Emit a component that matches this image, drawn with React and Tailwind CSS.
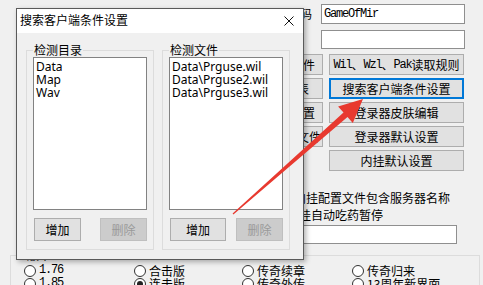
import React from "react";

const CJK = "font-['Noto_Sans_CJK_SC',sans-serif]";
const MONO = "font-['Liberation_Mono','Noto_Sans_CJK_SC',monospace] tracking-[-1.2px]";

function Radio({ label, checked, mono }) {
  return (
    <div className="flex items-center gap-[3px] h-[13px]">
      <span className="w-[12px] h-[12px] shrink-0 rounded-full border border-[#333333] bg-white flex items-center justify-center">
        {checked && <span className="w-[6px] h-[6px] rounded-full bg-[#222222]" />}
      </span>
      <span className={`text-[12px] leading-[13px] text-black whitespace-nowrap ${mono ? MONO : CJK}`}>{label}</span>
    </div>
  );
}

function WinButton({ children, className = "" }) {
  return (
    <div className={`h-[23px] border border-[#adadad] bg-[#e1e1e1] flex items-center justify-center text-[12px] text-black ${CJK} ${className}`}>
      {children}
    </div>
  );
}

function DisabledButton({ children, className = "" }) {
  return (
    <div className={`h-[23px] border border-[#bfbfbf] bg-[#cccccc] flex items-center justify-center text-[12px] text-[#9a9a9a] ${CJK} ${className}`}>
      {children}
    </div>
  );
}

function Group({ title, items, addW }) {
  return (
    <fieldset className="w-[128px] h-[208px] border border-[#dcdcdc] px-[6px]">
      <legend className={`px-[1px] text-[12px] leading-[16px] text-black ${CJK}`}>{title}</legend>
      <div className="-mt-[1px] w-[114px] h-[153px] bg-white border border-[#828282] pt-[2px] pl-[2px] font-['Noto_Sans','Open_Sans',sans-serif] text-[12px] leading-[13px] text-black">
        {items.map((t) => (
          <div key={t} className="whitespace-nowrap">{t}</div>
        ))}
      </div>
      <div className="mt-[8px] ml-[1px] flex items-center justify-between">
        <WinButton className={addW}>增加</WinButton>
        <DisabledButton className="w-[47px]">删除</DisabledButton>
      </div>
    </fieldset>
  );
}

function BgButton({ children, className = "" }) {
  return (
    <div className={`h-[21px] border border-[#adadad] bg-[#e1e1e1] flex items-center text-[12px] text-black whitespace-nowrap overflow-hidden ${className}`}>
      {children}
    </div>
  );
}

export default function App() {
  return (
    <div className="relative w-[483px] h-[285px] overflow-hidden bg-[#f0f0f0]">
      {/* background main window */}
      <div className="flex flex-col">
        <div className="mt-[4px] flex items-center h-[20px]">
          <div className={`w-[312px] text-right text-[12px] text-black ${CJK}`}>游戏代码</div>
          <div className="ml-[9px] w-[144px] h-[20px] bg-white border border-[#8f8f8f] flex items-center pl-[2px]">
            <span className={`text-[12px] text-black ${MONO}`}>GameOfMir</span>
          </div>
        </div>
        <div className="mt-[6px] flex items-center h-[19px]">
          <div className="w-[312px]" />
          <div className="ml-[9px] w-[144px] h-[19px] bg-white border border-[#8f8f8f]" />
        </div>

        <div className="mt-[5px] flex">
          <div className="ml-[230px] w-[93px] flex flex-col gap-[3px]">
            <BgButton className={`justify-end pr-[7px] ${CJK}`}>客户端文件</BgButton>
            <BgButton className={`justify-end pr-[13px] ${CJK}`}>列表</BgButton>
            <BgButton className={`justify-end pr-[7px] ${CJK}`}>设置</BgButton>
            <BgButton className={`justify-end pr-[1px] ${CJK}`}>文件</BgButton>
          </div>
          <div className="ml-[6px] w-[135px] flex flex-col gap-[3px]">
            <BgButton className="justify-center">
              <span className={MONO}>Wil</span>
              <span className={CJK}>、</span>
              <span className={MONO}>Wzl</span>
              <span className={CJK}>、</span>
              <span className={MONO}>Pak</span>
              <span className={CJK}>读取规则</span>
            </BgButton>
            <div className={`h-[21px] border-2 border-[#0078d7] bg-[#e1e1e1] flex items-center justify-center text-[12px] text-black ${CJK}`}>
              搜索客户端条件设置
            </div>
            <BgButton className={`justify-center ${CJK}`}>登录器皮肤编辑</BgButton>
            <BgButton className={`justify-center ${CJK}`}>登录器默认设置</BgButton>
            <BgButton className={`justify-center ${CJK}`}>内挂默认设置</BgButton>
          </div>
        </div>

        <div className={`mt-[18px] flex flex-col text-[12px] text-black ${CJK}`}>
          <div className="h-[17px] flex items-center pl-[278px] gap-[3px]">
            <span className="w-[13px] h-[13px] border border-[#333] bg-white" />
            <span className="whitespace-nowrap">内挂配置文件包含服务器名称</span>
          </div>
          <div className="h-[17px] flex items-center pl-[271px] gap-[3px]">
            <span className="w-[13px] h-[13px] border border-[#333] bg-white" />
            <span className="whitespace-nowrap">内挂自动吃药暂停</span>
          </div>
        </div>

        <div className="mt-[2px] ml-[200px] w-[257px] h-[19px] bg-white border border-[#8f8f8f]" />

        <fieldset className="mt-[3px] ml-[10px] w-[470px] h-[60px] border border-[#dcdcdc] pl-[13px]">
          <legend className={`ml-[1px] px-[2px] text-[12px] leading-[16px] text-black ${CJK}`}>版本</legend>
          <div className="mt-[1px] grid grid-cols-[110px_108px_110px_110px]">
            <Radio label="1.76" mono />
            <Radio label="合击版" />
            <Radio label="传奇续章" />
            <Radio label="传奇归来" />
            <Radio label="1.85" mono />
            <Radio label="连击版" checked />
            <Radio label="传奇外传" />
            <Radio label="13周年新界面" />
          </div>
        </fieldset>
      </div>

      {/* dialog window */}
      <div className="absolute left-[16px] top-[8px] w-[288px] h-[252px] border border-[#5a5a5a] bg-[#f0f0f0] shadow-[2px_2px_5px_rgba(0,0,0,0.3)] flex flex-col">
        <div className="h-[24px] bg-white flex items-center justify-between pl-[3px] pr-[9px] pb-[3px]">
          <span className={`text-[12px] text-black ${CJK}`}>搜索客户端条件设置</span>
          <svg width="10" height="10" viewBox="0 0 10 10" className="mt-[3px]">
            <path d="M0.5 0.5 L9.5 9.5 M9.5 0.5 L0.5 9.5" stroke="#111" strokeWidth="1" />
          </svg>
        </div>
        <div className="flex gap-[8px] pl-[9px] pt-[9px]">
          <Group title="检测目录" items={["Data", "Map", "Wav"]} addW="w-[47px]" />
          <Group
            title="检测文件"
            items={["Data\\Prguse.wil", "Data\\Prguse2.wil", "Data\\Prguse3.wil"]}
            addW="w-[56px]"
          />
        </div>
      </div>

      {/* red annotation arrow */}
      <svg className="absolute left-0 top-0 pointer-events-none" width="483" height="285" viewBox="0 0 483 285">
        <polygon
          points="233.4,214.5 347.5,117.1 352.8,122.9 363,99 338.1,106.6 343.5,112.5 232.6,213.5"
          fill="#e8392f"
        />
      </svg>
    </div>
  );
}
